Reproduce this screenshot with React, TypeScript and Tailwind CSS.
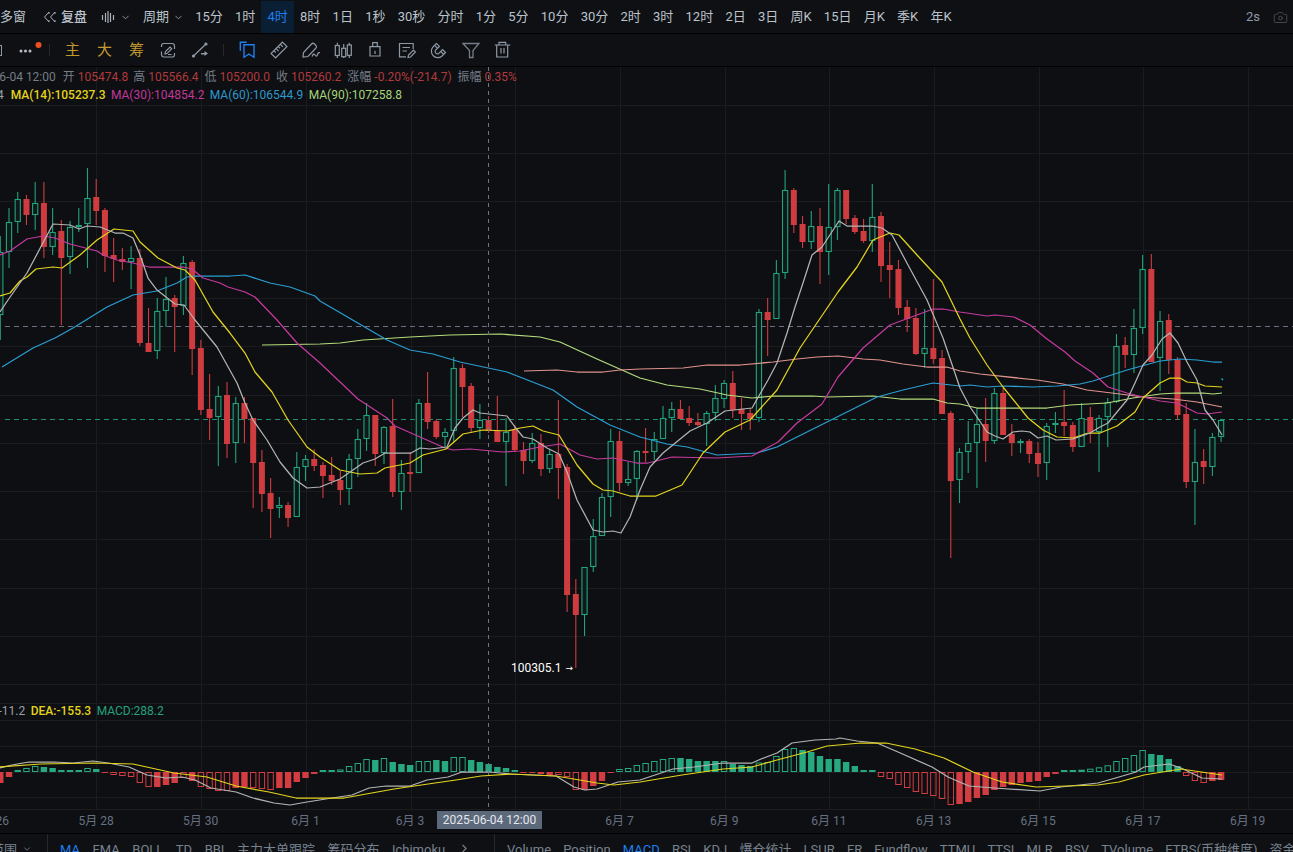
import React from "react";
import { ChevronDown, Camera, ChevronRight } from "lucide-react";

type Pt = [number, number];
const X = (k: number) => 0.3 + 8.72 * k;

// bodyTop, bodyBottom, wickTop, wickBottom, up(1)/down(0)
const C: number[][] = [
[252,315,236,340,1],[222,252,208,268,1],[199,222,192,233,1],[199,215,195,225,0],[203,215,182,230,1],[203,247,182,258,0],[232,247,208,255,1],[231,258,220,325,0],[227,257,221,274,1],[225,227,208,232,1],
[198,224,168,268,1],[197,211,179,225,0],[210,256,208,272,0],[255,259,238,282,0],[259,262,248,270,0],[258,262,246,289,1],[258,343,249,346,0],[343,352,308,352,0],[311,351,298,359,1],[299,311,277,327,1],
[298,307,295,352,0],[263,306,256,315,1],[262,349,260,375,0],[348,410,340,415,0],[409,418,374,440,0],[396,417,386,466,1],[395,444,382,458,0],[403,443,397,463,1],[403,419,397,443,0],[418,463,418,508,0],
[462,494,450,512,0],[493,509,478,538,0],[505,508,497,518,1],[505,518,502,527,0],[467,517,452,517,1],[459,467,455,481,1],[459,466,449,471,0],[465,476,462,498,0],[475,481,457,485,0],[480,490,471,505,0],
[459,489,454,505,1],[439,459,429,477,1],[415,439,403,451,1],[415,454,415,466,0],[427,453,426,464,1],[426,492,399,497,0],[473,492,460,510,1],[472,474,452,492,0],[403,473,399,473,1],[403,422,372,429,0],
[421,437,419,439,0],[432,437,428,447,1],[368,431,357,442,1],[368,387,364,417,0],[386,428,383,433,0],[420,428,404,439,1],[420,431,416,433,0],[431,442,396,442,0],[432,442,418,486,1],[430,450,425,452,0],
[450,461,442,474,0],[443,461,433,463,1],[443,469,434,476,0],[454,469,450,473,1],[454,468,400,499,0],[467,595,464,612,0],[594,615,579,668,0],[567,615,567,636,1],[536,567,519,572,1],[497,536,493,536,1],
[441,497,429,517,1],[441,483,431,491,0],[479,483,462,486,1],[451,479,450,500,1],[451,453,428,462,0],[439,452,432,460,1],[418,439,406,439,1],[409,418,402,432,1],[409,419,400,419,0],[418,423,406,426,0],
[422,425,413,426,0],[413,424,411,446,1],[398,413,385,421,1],[383,399,380,408,1],[383,410,371,418,0],[409,414,398,430,0],[413,419,408,430,0],[312,418,309,422,1],[312,320,298,356,0],[273,319,260,319,1],
[190,273,170,279,1],[190,225,188,233,0],[224,242,216,248,0],[226,242,211,249,1],[226,252,208,284,0],[227,252,184,275,1],[190,227,188,240,1],[190,219,190,224,0],[218,232,215,234,0],[231,241,219,243,0],
[217,241,184,252,1],[216,266,212,282,0],[265,270,242,298,0],[269,308,260,315,0],[307,319,300,332,0],[318,354,308,355,0],[348,354,309,368,1],[348,359,279,364,0],[358,414,350,414,0],[413,481,411,558,0],
[452,480,448,503,1],[443,452,421,473,1],[424,443,408,488,1],[424,441,398,462,0],[393,441,388,444,1],[393,435,388,435,0],[434,443,424,456,0],[441,443,439,453,1],[441,454,439,463,0],[453,464,442,477,0],
[426,463,423,480,1],[423,425,412,433,1],[422,426,390,436,0],[425,447,422,452,0],[418,447,403,447,1],[417,432,407,443,0],[418,432,415,472,1],[402,417,398,447,1],[346,402,334,403,1],[345,355,337,368,0],
[328,355,309,373,1],[269,328,255,334,1],[269,362,254,362,0],[321,358,311,391,1],[320,360,314,374,0],[360,415,357,420,0],[414,482,403,488,0],[462,482,429,525,1],[461,467,449,484,0],[437,467,433,476,1],
[420,437,419,442,1],
];

const M = [
-11,-5,2,4,6,5,4,2,2,2,4,3,-1,-3,-4,-5,-11,-15,-15,-13,-11,-6,-9,-15,-17,-19,-19,-16,-15,-16,-17,-18,-16,-16,-10,-6,-2,2,2,2.5,6,9,13,12,14,10,8,7,11,11,12,11,15,15,12,10,8,5,4,2,-1,-1,-2,-3,-3,-5,-18,-18,-14,-9,-1,3,4,7,
9,11,13,14,14,13,11,11,11,11,8,7,6,9.5,10,16,23,24,22,20,16,13,13,10,6,2,2,-5,-7,-13,-16,-20,-22,-24,-27,-33,-32,-30,-26,-23,-18,-15,-13,-11,-10,-9,-5,-2,2,2,2.3,3.3,4.7,6.7,11,14,17,22,18,17,13,6,-4,-9,-11,-9,-8,
];
const hollow = new Set([3,4,10,13,14,15,16,17,21,23,24,25,26,29,30,31,39,40,41,42,44,48,49,52,53,64,65,66,71,72,73,74,75,76,77,83,87,88,89,90,91,101,102,103,104,105,106,107,108,109,125,126,127,128,129,130,131,136,137,138]);

const white: Pt[] = [[0,312],[8,300],[27,273],[53,224],[70,225],[79,229],[87,226],[100,227],[115,233],[123,233],[133,238],[140,255],[148,278],[157,290],[175,304],[184,305],[195,320],[217,347],[237,383],[245,403],[253,420],[267,440],[280,462],[293,478],[307,488],[320,487],[340,479],[363,463],[375,459],[385,453],[395,453],[411,453],[420,448],[430,449],[447,447],[455,428],[463,418],[473,410],[480,413],[507,416],[515,427],[523,437],[533,439],[547,448],[559,454],[567,472],[577,500],[593,530],[603,532],[613,531],[621,533],[630,517],[640,490],[650,467],[663,453],[690,431],[707,423],[725,411],[752,408],[768,380],[777,363],[787,333],[795,307],[803,283],[812,255],[822,247],[839,221],[847,226],[872,226],[882,228],[892,235],[908,265],[927,300],[943,338],[960,388],[970,407],[977,417],[987,432],[995,436],[1003,439],[1013,432],[1022,431],[1030,432],[1038,438],[1047,436],[1056,440],[1073,439],[1090,433],[1100,427],[1108,423],[1117,412],[1127,400],[1135,383],[1143,365],[1152,355],[1162,339],[1170,333],[1178,343],[1187,362],[1197,380],[1205,410],[1213,420],[1222,435]];
const yellow: Pt[] = [[0,296],[10,293],[20,281],[27,277],[36,269],[53,267],[62,268],[80,255],[97,240],[114,229],[133,231],[140,242],[158,258],[177,268],[185,270],[195,280],[213,312],[230,333],[245,353],[255,372],[272,392],[288,420],[307,447],[320,457],[340,470],[360,474],[377,473],[385,468],[410,463],[423,455],[446,449],[463,434],[483,430],[508,431],[520,428],[533,426],[543,431],[559,435],[568,450],[577,465],[593,484],[603,490],[613,491],[630,496],[656,496],[682,485],[703,453],[725,432],[750,420],[777,390],[800,348],[838,292],[857,267],[873,240],[890,233],[899,235],[917,255],[942,282],[960,319],[970,338],[987,365],[1003,387],[1028,418],[1043,430],[1057,437],[1073,438],[1088,433],[1100,433],[1117,426],[1135,412],[1143,398],[1160,383],[1170,378],[1180,378],[1187,382],[1197,383],[1205,386],[1222,387]];
const magenta: Pt[] = [[0,255],[10,251],[27,239],[43,236],[55,238],[70,244],[97,251],[103,255],[117,260],[133,263],[149,267],[183,267],[192,269],[203,278],[220,283],[228,287],[245,292],[255,297],[277,320],[297,343],[320,363],[358,399],[387,418],[395,426],[445,448],[453,450],[470,449],[503,452],[520,451],[540,447],[560,444],[580,455],[597,459],[613,458],[637,463],[648,463],[672,457],[717,458],[752,456],[778,442],[797,423],[822,404],[838,377],[863,348],[890,325],[933,309],[943,309],[960,312],[987,316],[995,315],[1014,317],[1030,325],[1047,339],[1065,352],[1075,361],[1093,373],[1108,387],[1127,393],[1143,397],[1160,401],[1177,403],[1197,413],[1207,414],[1222,412]];
const blue: Pt[] = [[2,367],[33,348],[55,338],[73,328],[107,307],[133,295],[157,291],[177,283],[187,277],[195,276],[230,276],[245,275],[270,283],[290,287],[315,296],[320,301],[387,340],[410,350],[433,354],[460,362],[507,372],[553,390],[577,407],[610,425],[640,437],[667,444],[687,447],[717,455],[757,453],[777,447],[797,437],[837,417],[877,397],[903,390],[933,383],[960,386],[970,385],[987,387],[1003,386],[1033,387],[1057,386],[1080,384],[1093,381],[1127,370],[1160,361],[1180,359],[1197,360],[1213,362],[1222,362]];
const green: Pt[] = [[262,345],[320,344],[340,343],[363,340],[410,337],[450,335],[500,334],[540,337],[560,342],[597,359],[640,378],[667,385],[700,389],[727,395],[752,398],[773,396],[813,396],[827,397],[873,396],[900,399],[933,399],[947,403],[960,404],[977,408],[1047,408],[1070,405],[1107,403],[1133,398],[1160,394],[1177,393],[1203,393],[1213,394],[1222,393]];
const salmon: Pt[] = [[524,371],[557,370],[577,372],[603,372],[620,370],[640,369],[683,368],[707,365],[740,365],[773,362],[797,359],[817,357],[838,356],[863,359],[880,360],[903,364],[927,367],[947,367],[960,371],[980,374],[1037,380],[1063,384],[1087,390],[1120,394],[1143,397],[1173,399],[1197,402],[1222,407]];
const dif: Pt[] = [[0,768],[12,765],[29,762],[54,762],[73,763],[93,761],[108,763],[129,767],[147,775],[166,778],[182,777],[195,780],[211,788],[236,792],[253,798],[274,803],[290,805],[307,802],[332,798],[352,795],[369,788],[386,786],[410,786],[427,780],[448,777],[462,772],[489,772],[510,774],[556,776],[574,787],[585,790],[597,789],[609,785],[618,782],[640,780],[673,769],[694,767],[723,763],[752,763],[761,759],[777,753],[792,743],[815,740],[836,739],[840,738],[857,741],[877,743],[898,752],[932,767],[948,777],[969,786],[994,788],[1040,791],[1061,787],[1098,783],[1119,777],[1136,772],[1144,767],[1169,764],[1181,768],[1202,778],[1222,779]];
const dea: Pt[] = [[0,767],[41,764],[95,763],[133,764],[174,773],[207,777],[236,786],[269,792],[296,798],[344,798],[394,789],[435,783],[456,780],[481,776],[510,774],[556,776],[597,783],[614,785],[640,782],[682,775],[723,769],[752,767],[777,760],[807,752],[827,746],[861,743],[886,743],[915,749],[944,758],[973,772],[1002,782],[1036,787],[1098,785],[1119,782],[1144,775],[1181,769],[1222,775]];

const pts = (p: Pt[]) => p.map((q) => q.join(",")).join(" ");
const GRID_H = [105,153,201,250,298,346,395,443,491,539,588,636,684,703,720,746,772,797];
const GRID_V = [96,201,306,411,515,620,725,829,934,1039,1143,1248];
const UP = "#24a27c";
const DOWN = "#cf3c40";

function Chart() {
  return (
    <svg className="absolute inset-0 block" width={1293} height={743} viewBox="0 67 1293 743">
      <g stroke="#1a1c20" strokeWidth={1} shapeRendering="crispEdges">
        {GRID_H.map((y) => <line key={y} x1={0} x2={1293} y1={y + 0.5} y2={y + 0.5} />)}
        {GRID_V.map((x) => <line key={x} x1={x + 0.5} x2={x + 0.5} y1={67} y2={810} />)}
      </g>
      <line x1={5} x2={1293} y1={326.5} y2={326.5} stroke="#6f6d80" strokeDasharray="5 4" />
      <line x1={5} x2={1293} y1={419.5} y2={419.5} stroke="#209073" strokeDasharray="5 4" />
      {C.map(([t, b, wt, wb, up], k) => {
        const c = X(k);
        const col = up ? UP : DOWN;
        return (
          <g key={k}>
            <line x1={c} x2={c} y1={wt} y2={wb} stroke={col} strokeWidth={1.1} />
            {up ? (
              <rect x={c - 2.6} y={t + 0.5} width={5.2} height={Math.max(b - t - 1, 1)} fill="#0e1a1a" stroke={col} strokeWidth={1.1} />
            ) : (
              <rect x={c - 3} y={t} width={6} height={Math.max(b - t, 1.5)} fill={col} />
            )}
          </g>
        );
      })}
      <g fill="none" strokeWidth={1.25} strokeLinejoin="round">
        <polyline points={pts(green)} stroke="#b5dc7c" />
        <polyline points={pts(salmon)} stroke="#e0938d" />
        <polyline points={pts(blue)} stroke="#2a9ed3" />
        <polyline points={pts(magenta)} stroke="#c53a9f" />
        <polyline points={pts(yellow)} stroke="#e3d41d" />
        <polyline points={pts(white)} stroke="#b4b4b4" />
      </g>
      <line x1={1221.5} y1={378.5} x2={1223} y2={380} stroke="#19b6c4" strokeWidth={1.2} />
      {M.map((v, k) => {
        const c = X(k);
        const col = v > 0 ? "#27a980" : "#d33d42";
        const top = v > 0 ? 772 - v : 772;
        const h = Math.abs(v);
        return hollow.has(k) ? (
          <rect key={k} x={c - 2.7} y={top + 0.5} width={5.4} height={Math.max(h - 1, 0.5)} fill="none" stroke={col} strokeWidth={1} />
        ) : (
          <rect key={k} x={c - 3.2} y={top} width={6.4} height={h} fill={col} />
        );
      })}
      <g fill="none" strokeWidth={1.25} strokeLinejoin="round">
        <polyline points={pts(dif)} stroke="#b4b4b4" />
        <polyline points={pts(dea)} stroke="#e3d41d" />
      </g>
      <line x1={488.5} x2={488.5} y1={67} y2={809} stroke="#6f757e" strokeDasharray="4 4" />
    </svg>
  );
}

const navA = ["15分","1时","4时","8时","1日","1秒","30秒","分时","1分","5分","10分","30分","2时","3时","12时","2日","3日","周K","15日","月K","季K","年K"];
const tabsA = ["EMA","BOLL","TD","BBI","主力大单跟踪","筹码分布","Ichimoku"];
const tabsB = ["Volume","Position","MACD","RSI","KDJ","爆仓统计","LSUR","FR","Fundflow","TTMU","TTSI","MLR","BSV","TVolume","ETBS(币种维度)","资金"];
const axis = ["5月 26","5月 28","5月 30","6月 1","6月 3","","6月 7","6月 9","6月 11","6月 13","6月 15","6月 17","6月 19"];

const I = ({ children, className = "" }: { children: React.ReactNode; className?: string }) => (
  <svg width={18} height={18} viewBox="0 0 18 18" fill="none" stroke="#8f99a6" strokeWidth={1.2} className={"block shrink-0 " + className}>
    {children}
  </svg>
);

export default function App() {
  return (
    <div
      className="flex h-[852px] w-[1293px] flex-col overflow-hidden bg-[#0d0f12] text-[13px] text-[#bcc3cc]"
      style={{ fontFamily: 'Roboto, "Noto Sans CJK SC", sans-serif' }}
    >
      {/* period bar */}
      <div className="flex h-[34px] shrink-0 items-center border-b border-black bg-[#0e1013] pt-[1px]">
        <span className="shrink-0">多窗</span>
        <svg width={13} height={12} viewBox="0 0 13 12" fill="none" stroke="#aab1bb" strokeWidth={1} className="ml-[17px] shrink-0">
          <path d="M6 1 L1.5 6 L6 11 M12 1 L7.5 6 L12 11 M6 1 V3 M12 1 V3 M6 11 V9 M12 11 V9" />
        </svg>
        <span className="ml-[5px] shrink-0 font-medium">复盘</span>
        <svg width={14} height={14} viewBox="0 0 14 14" fill="none" stroke="#aab1bb" strokeWidth={1.2} className="ml-[14px] shrink-0">
          <path d="M1.5 5 V10 M4.5 3 V12 M7 1 V13 M9.5 3 V12 M12.5 5 V10" />
        </svg>
        <ChevronDown size={11} className="ml-[5px] shrink-0 text-[#8f99a6]" />
        <span className="ml-[12px] shrink-0">周期</span>
        <ChevronDown size={11} className="ml-[4px] shrink-0 text-[#8f99a6]" />
        <div className="ml-[5px] flex h-full items-stretch">
          {navA.map((n) => (
            <span
              key={n}
              className={
                n === "4时"
                  ? "flex items-center bg-[#0a1f33] px-[6.12px] text-[#1d7ff0]"
                  : "flex items-center px-[6.12px]"
              }
            >
              {n}
            </span>
          ))}
        </div>
        <span className="ml-auto text-[#8f99a6]">2s</span>
        <Camera size={15} strokeWidth={1.2} className="ml-[13px] mr-[5px] shrink-0 text-[#555b63]" />
      </div>

      {/* tool bar */}
      <div className="flex h-[33px] shrink-0 items-center border-b border-black bg-[#0e1013]">
        <span className="h-[11px] w-[2px] shrink-0 border-y border-r border-[#8f99a6]" />
        <svg width={24} height={16} viewBox="0 0 24 16" className="ml-[16px] shrink-0">
          <circle cx={3} cy={9} r={1.5} fill="#b7bdc6" />
          <circle cx={7.5} cy={9} r={1.5} fill="#b7bdc6" />
          <circle cx={12} cy={9} r={1.5} fill="#b7bdc6" />
          <circle cx={20.5} cy={3} r={3} fill="#f04e23" />
        </svg>
        <span className="ml-[7px] h-[12px] w-px shrink-0 bg-[#25282d]" />
        <div className="ml-[15px] flex gap-[17px] text-[15px] text-[#c2982f]">
          <span>主</span>
          <span>大</span>
          <span>筹</span>
        </div>
        <svg width={18} height={18} viewBox="0 0 18 18" fill="none" stroke="#8f99a6" strokeWidth={1.2} className="ml-[15px] shrink-0">
          <path d="M4 2.5 H13 Q15.5 2.5 15.5 5 V8 M14 16 H5 Q2.5 16 2.5 13.5 V10.5 M2.5 6 V5 Q2.5 2.5 4.5 2.5 M15.5 12 V13.5 Q15.5 16 13.5 16" />
          <path d="M6 13 L6.5 10.5 L11 6 L12.7 7.7 L8.2 12.3 Z M9 13.5 H12.5" />
        </svg>
        <svg width={18} height={18} viewBox="0 0 18 18" fill="none" stroke="#8f99a6" strokeWidth={1.2} className="ml-[14px] shrink-0">
          <path d="M2.5 15 L15 3" />
          <circle cx={2.5} cy={15} r={1} fill="#8f99a6" />
          <circle cx={15} cy={3} r={1} fill="#8f99a6" />
          <path d="M10 12 H13.5 V10 L17 12.5 L13.5 15 V13.5 H10 Z" fill="#8f99a6" stroke="none" />
        </svg>
        <span className="ml-[14px] h-[12px] w-px shrink-0 bg-[#25282d]" />
        <div className="ml-[14px] flex items-center gap-[14px]">
          <I>
            <path d="M2.3 9.7 V1.3 H8.7 M6 3.7 H16 V16.3 L11 13 L6 16.3 Z" stroke="#1d7ff0" strokeWidth={1.4} />
          </I>
          <I>
            <g transform="translate(9 9) rotate(-45)">
              <rect x={-8} y={-3.2} width={16} height={6.4} />
              <path d="M-4 -3.2 V-0.5 M-1 -3.2 V0.5 M2 -3.2 V-0.5 M5 -3.2 V0.5" />
            </g>
          </I>
          <I>
            <path d="M1 16 L1.5 11.5 L9.5 3 Q11 1.5 12.5 3 L14 4.5 Q15 6 14 7 L6 15.5 Z" />
            <path d="M10 15.5 Q11.5 11.5 13 14 T15.5 13.5 T18 12" />
          </I>
          <I>
            <path d="M3.3 1.7 V4.5 M3.3 14.5 V17 M9.7 3 V7.3 M9.7 15.7 V17 M15.3 1.7 V4 M15.3 14.3 V17" />
            <rect x={1.3} y={4.5} width={4} height={10} />
            <rect x={7.7} y={7.3} width={4} height={8.4} />
            <rect x={13.3} y={4} width={4} height={10.3} />
          </I>
          <I>
            <path d="M4 5.7 H14 V15 H4 Z M6.7 5.7 V1.7 H11.3 V5.7 M9 9.7 V13" />
          </I>
          <I>
            <path d="M15.2 8 V2.5 H1.5 V15.8 H8 M4.5 6.5 H12 M4.5 10 H9" />
            <path d="M10 16.5 L10.5 14 L15.5 9 L17.5 11 L12.5 16 Z" />
          </I>
          <I>
            <path d="M6.5 2.5 L2.8 6.2 A6.4 6.4 0 0 0 11.8 15.2 L15.5 11.5 L12.6 8.6 L8.8 12.4 A2.3 2.3 0 0 1 5.6 9.2 L9.4 5.4 Z M4.6 4.4 L7.6 7.4 M10.7 10.5 L13.6 13.4" />
          </I>
          <I>
            <path d="M1 2.5 H17 L11 9.5 V16.5 H7.5 V9.5 Z" stroke="#767d87" strokeWidth={1.3} />
          </I>
          <I>
            <path d="M0.7 4 H16.3 M5 4 V1.3 H11.7 V4 M2.7 4 V16 H13.7 V4 M7 7 V12.5 M10 7 V12.5" />
          </I>
        </div>
      </div>

      {/* chart */}
      <div className="relative h-[742px] shrink-0">
        <Chart />
        <div className="absolute left-0 top-[1px] whitespace-nowrap text-[12px] leading-[18px]">
          <div className="flex text-[#767d88]">
            <span className="-ml-[37.7px] mr-[7px]">2025-06-04 12:00</span>
            <span>开</span><span className="ml-[3px] mr-[5px] text-[#b13a3e]">105474.8</span>
            <span>高</span><span className="ml-[3px] mr-[6px] text-[#b13a3e]">105566.4</span>
            <span>低</span><span className="ml-[3px] mr-[6px] text-[#b13a3e]">105200.0</span>
            <span>收</span><span className="ml-[3px] mr-[6px] text-[#b13a3e]">105260.2</span>
            <span>涨幅</span><span className="ml-[3px] mr-[6px] text-[#b13a3e]">-0.20%(-214.7)</span>
            <span>振幅</span><span className="ml-[3px] text-[#b13a3e]">0.35%</span>
          </div>
          <div className="flex gap-[5.4px]">
            <span className="-ml-[3px] mr-[1.6px] text-[#9aa0a8]">4</span>
            <span className="font-medium text-[#e3d41d]">MA(14):105237.3</span>
            <span className="text-[#c0389b]">MA(30):104854.2</span>
            <span className="text-[#2d98cc]">MA(60):106544.9</span>
            <span className="text-[#a8d47a]">MA(90):107258.8</span>
          </div>
        </div>
        <div className="absolute left-[511px] top-[592px] flex items-center whitespace-nowrap text-[12px] leading-[18px] text-white">
          100305.1
          <span className="ml-[4px]" style={{ fontFamily: '"DejaVu Sans", sans-serif', fontSize: 9 }}>→</span>
        </div>
        <div className="absolute left-0 top-[635px] flex gap-[5.5px] whitespace-nowrap text-[12px] leading-[18px]">
          <span className="-ml-[1.5px] text-[#9aa0a8]">-11.2</span>
          <span className="font-medium text-[#e3d41d]">DEA:-155.3</span>
          <span className="text-[#24a27c]">MACD:288.2</span>
        </div>
      </div>

      {/* time axis */}
      <div className="relative h-[24px] shrink-0 border-t border-[#1a1c20]">
        <div className="-ml-[61px] flex h-[21px] items-center text-[12px] text-[#667182]">
          {axis.map((a, i) => (
            <span key={i} className="w-[104.7px] shrink-0 text-center">{a}</span>
          ))}
        </div>
        <div className="absolute left-[437px] top-[1px] flex h-[18px] w-[105px] items-center justify-center bg-[#5c697b] text-[12px] text-[#e4e7ec]">
          2025-06-04 12:00
        </div>
      </div>

      {/* indicators */}
      <div className="flex h-[19px] shrink-0 overflow-hidden border-t border-black bg-[#0e1013] text-[#78828f]">
        <div className="flex w-[48px] shrink-0 border-r border-[#25282d] pt-[6px]">
          <span className="-ml-[9px] whitespace-nowrap">范围</span>
          <ChevronDown size={10} className="ml-[5px] mt-[4px] shrink-0" />
        </div>
        <div className="flex w-[447px] shrink-0 gap-[12.5px] whitespace-nowrap border-r border-[#25282d] pl-[12px] pt-[6px]">
          <span className="text-[#1d7ff0]">MA</span>
          {tabsA.map((t) => <span key={t}>{t}</span>)}
          <ChevronRight size={13} className="mt-[2px] shrink-0" />
        </div>
        <div className="flex gap-[12.2px] whitespace-nowrap pl-[12px] pt-[6px]">
          {tabsB.map((t) => (
            <span key={t} className={t === "MACD" ? "text-[#1d7ff0]" : ""}>{t}</span>
          ))}
        </div>
      </div>
    </div>
  );
}
